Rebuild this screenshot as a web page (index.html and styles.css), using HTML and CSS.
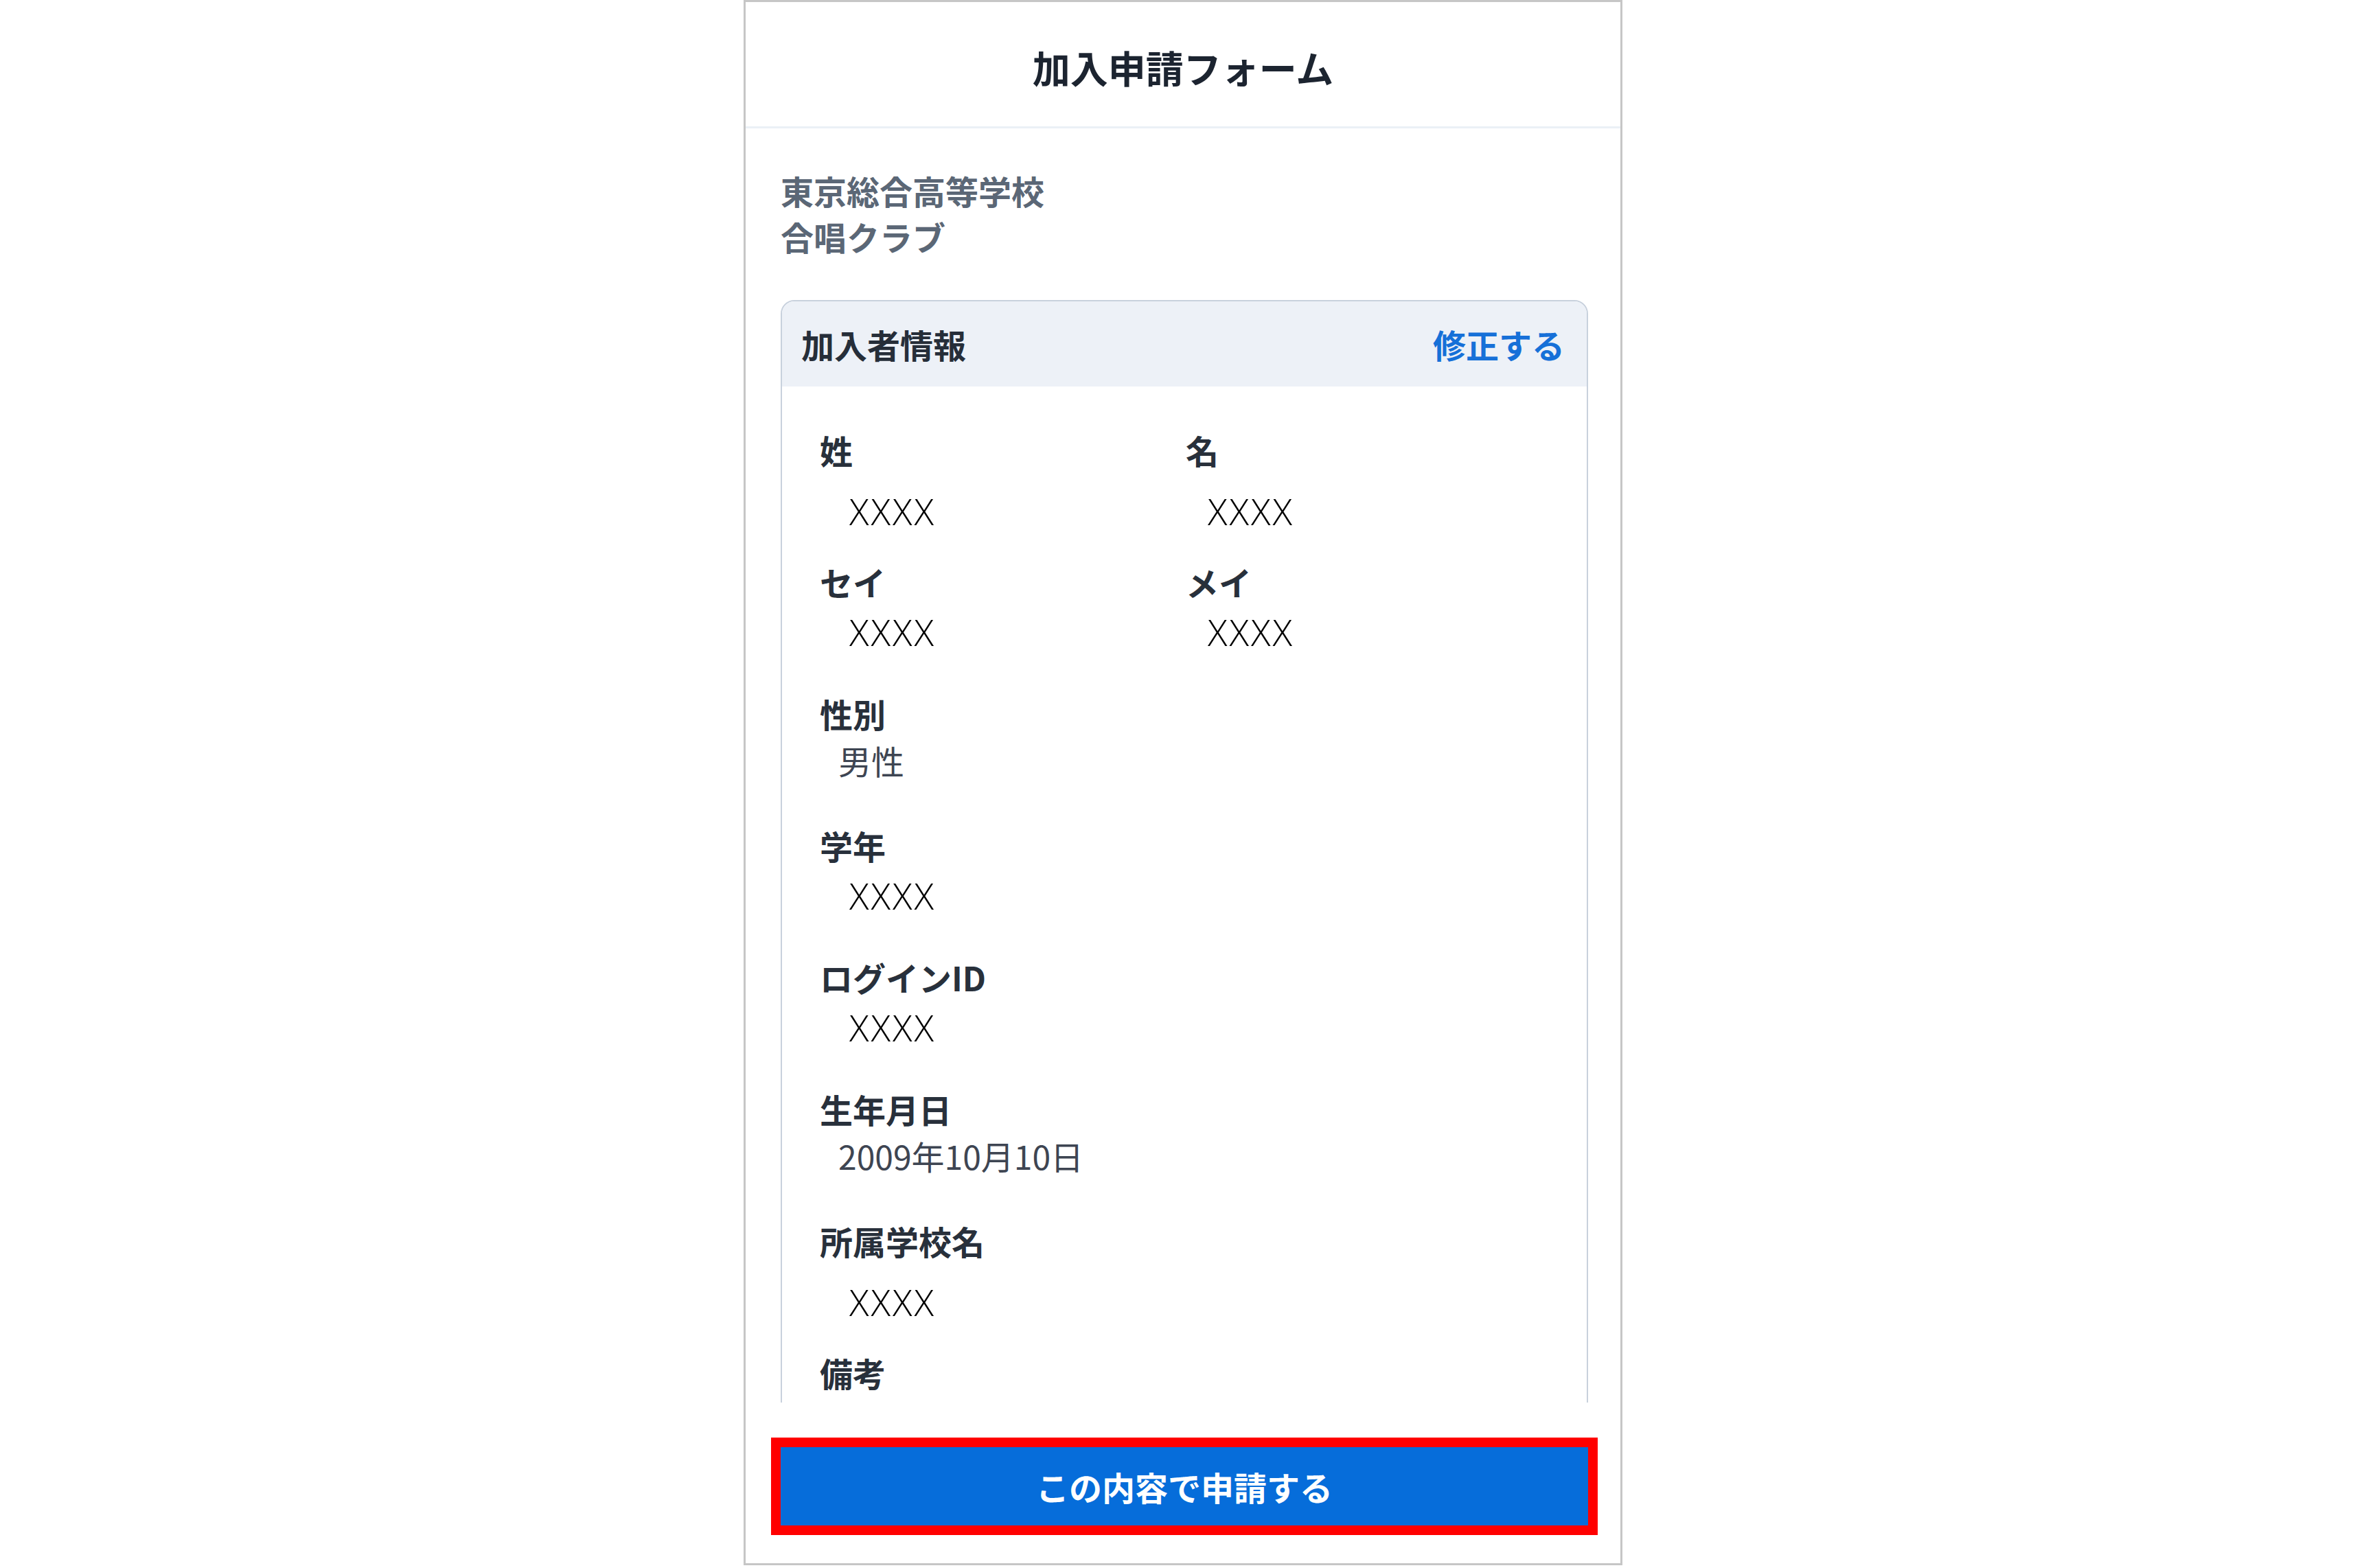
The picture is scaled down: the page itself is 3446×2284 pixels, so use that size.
FILE: index.html
```html
<!DOCTYPE html>
<html lang="ja">
<head>
  <meta charset="UTF-8">
  <title>加入申請フォーム</title>
  <link rel="stylesheet" href="styles.css">
</head>
<body>
  <div class="phone">
    <header class="phone-header">
      <h1>加入申請フォーム</h1>
    </header>

    <main class="phone-body">
      <p class="org">東京総合高等学校<br>合唱クラブ</p>

      <section class="card">
        <div class="card-header">
          <h2>加入者情報</h2>
          <a href="#" class="edit">修正する</a>
        </div>

        <div class="card-body">
          <div class="pair">
            <div class="field">
              <div class="label">姓</div>
              <div class="value blank low">XXXX</div>
            </div>
            <div class="field">
              <div class="label">名</div>
              <div class="value blank low">XXXX</div>
            </div>
          </div>

          <div class="pair">
            <div class="field">
              <div class="label">セイ</div>
              <div class="value blank">XXXX</div>
            </div>
            <div class="field">
              <div class="label">メイ</div>
              <div class="value blank">XXXX</div>
            </div>
          </div>

          <div class="field">
            <div class="label">性別</div>
            <div class="value">男性</div>
          </div>

          <div class="field">
            <div class="label">学年</div>
            <div class="value blank">XXXX</div>
          </div>

          <div class="field">
            <div class="label">ログインID</div>
            <div class="value blank">XXXX</div>
          </div>

          <div class="field">
            <div class="label">生年月日</div>
            <div class="value">2009年10月10日</div>
          </div>

          <div class="field">
            <div class="label">所属学校名</div>
            <div class="value blank low">XXXX</div>
          </div>

          <div class="field">
            <div class="label">備考</div>
            <div class="value">&nbsp;</div>
          </div>
        </div>
      </section>
    </main>

    <footer class="phone-footer">
      <button class="submit">この内容で申請する</button>
    </footer>
  </div>
</body>
</html>
```

FILE: styles.css
```css
body {
  margin: 0;
  background: #fff;
  font-family: "Noto Sans CJK JP", "Noto Sans", sans-serif;
}

.phone {
  width: 1280px;
  height: 2280px;
  margin: 0 auto;
  box-sizing: border-box;
  border: 3px solid #c6c6c6;
  background: #fff;
  display: flex;
  flex-direction: column;
}

/* cabecera */
.phone-header {
  height: 184px;
  flex-shrink: 0;
  box-sizing: border-box;
  padding-top: 6px;
  border-bottom: 3px solid #ebf0f6;
  display: flex;
  align-items: center;
  justify-content: center;
}

.phone-header h1 {
  margin: 0;
  font-size: 55px;
  font-weight: 700;
  color: #1c2430;
}

/* zona con scroll */
.phone-body {
  flex: 1;
  overflow: hidden;
  padding: 57px 47px 0 51px;
}

.org {
  margin: 0;
  font-size: 48px;
  line-height: 67px;
  font-weight: 700;
  color: #5b6776;
}

.card {
  margin-top: 59px;
  border: 2px solid #c8d1dd;
  border-radius: 20px 20px 0 0;
  overflow: hidden;
}

.card-header {
  height: 124px;
  background: #edf1f7;
  display: flex;
  align-items: center;
  justify-content: space-between;
  padding: 0 32px 0 28px;
}

.card-header h2 {
  margin: 0;
  font-size: 48px;
  font-weight: 700;
  color: #262e39;
}

.edit {
  font-size: 48px;
  font-weight: 700;
  color: #1670d8;
  text-decoration: none;
}

.card-body {
  display: flex;
  flex-direction: column;
  gap: 68px;
  padding: 64px 51px 120px 55px;
}

.pair {
  display: grid;
  grid-template-columns: 1fr 1fr;
}

.label {
  font-size: 48px;
  line-height: 56px;
  font-weight: 700;
  color: #28303b;
}

.value {
  margin-top: 12px;
  padding-left: 27px;
  font-size: 48px;
  line-height: 56px;
  color: #3e4552;
}

/* valores sin rellenar */
.value.blank {
  margin-top: 18px;
  margin-bottom: -6px;
  padding-left: 43px;
  font-family: "Open Sans", sans-serif;
  font-size: 53px;
  font-weight: 300;
  letter-spacing: 3px;
  color: #000;
}

.pair .field + .field .value.blank {
  padding-left: 32px;
}

.value.low {
  margin-top: 34px;
  margin-bottom: -22px;
}

/* boton inferior */
.phone-footer {
  height: 234px;
  flex-shrink: 0;
  box-sizing: border-box;
  padding: 65px 47px 55px 51px;
}

.submit {
  display: block;
  width: 100%;
  height: 114px;
  border: none;
  background: #066dda;
  color: #fff;
  font-family: "Noto Sans CJK JP", sans-serif;
  font-size: 48px;
  font-weight: 700;
  outline: 14px solid #ff0000;
  cursor: pointer;
}
```
